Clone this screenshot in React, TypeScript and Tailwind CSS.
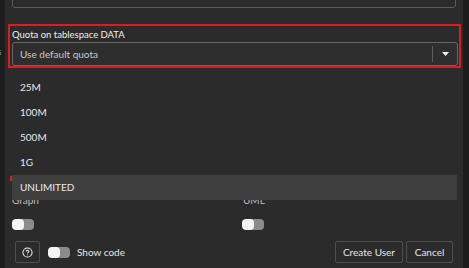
import { CircleHelp } from "lucide-react";

// ------------------------
// Types
// ------------------------
interface ToggleProps {
  className?: string;
}

const quotaOptions = ["25M", "100M", "500M", "1G", "UNLIMITED"];

function Toggle({ className = "" }: ToggleProps) {
  return (
    <div className={`flex h-[11px] w-[22px] overflow-hidden rounded-[4px] bg-[#8b8b8b] ${className}`}>
      <div className="h-full w-[12px] rounded-[4px] bg-[#f4f4f4]" />
    </div>
  );
}

export default function App() {
  return (
    <div
      className="flex h-[268px] w-[469px] overflow-hidden bg-[#1c1c1c] text-[10px] text-[#e6e6e6]"
      style={{ fontFamily: 'Lato, "Noto Sans", sans-serif' }}
    >
      {/* left strip with page behind */}
      <div className="relative w-[5px] shrink-0">
        <span className="absolute left-[-5px] top-[44px] text-[10px] text-[#8a8a8a]">ls</span>
      </div>

      {/* Dialog panel */}
      <div className="relative flex w-[458px] shrink-0 flex-col bg-[#2b2b2b]">
        {/* previous field, scrolled off the top */}
        <div className="mx-[7px] mt-[-16px] h-[24px] rounded-[3px] border border-[#5c5c5c]" />

        {/* Quota field, outlined in red */}
        <div className="relative ml-[3px] mr-[2px] mt-[16px] flex h-[44px] flex-col border-2 border-[#e01b1b] px-[2px]">
          <label className="mt-[2px] h-[14px] text-[9.5px] leading-[14px] text-[#f0f0f0]">Quota on tablespace DATA</label>
          <div className="mr-[-1px] flex h-[24px] items-center rounded-[3px] border border-[#666666] bg-[#2e2e2e]">
            <span className="flex-1 pl-[7px] text-[#c9c9c9]">Use default quota</span>
            <div className="h-[16px] w-px bg-[#5e5e5e]" />
            <div className="flex w-[24px] items-center justify-center">
              <svg width="7" height="4" viewBox="0 0 7 4">
                <path d="M0 0 H7 L3.5 4 Z" fill="#f2f2f2" />
              </svg>
            </div>
          </div>
        </div>

        {/* fields hidden behind the open list */}
        <div className="mt-[125px] grid grid-cols-[230px_1fr] px-[7px]">
          <div className="flex flex-col">
            <span className="h-[14px] leading-[14px] text-[#bdbdbd]">Graph</span>
            <Toggle className="mt-[12px]" />
          </div>
          <div className="flex flex-col">
            <span className="h-[14px] pl-[1px] leading-[14px] text-[#bdbdbd]">UML</span>
            <Toggle className="mt-[12px]" />
          </div>
        </div>

        {/* Footer */}
        <div className="mt-[11px] flex items-center px-[10px]">
          <button className="flex h-[22px] w-[25px] items-center justify-center rounded-[2px] border border-[#4f4f4f]">
            <CircleHelp size={11} strokeWidth={2.2} color="#ededed" />
          </button>
          <Toggle className="ml-[8px]" />
          <span className="ml-[7px] text-[#e6e6e6]">Show code</span>
          <div className="flex-1" />
          <button className="h-[22px] w-[68px] rounded-[2px] border border-[#4f4f4f] text-[#e6e6e6]">Create User</button>
          <button className="ml-[3px] h-[22px] w-[47px] rounded-[2px] border border-[#4f4f4f] text-[#e6e6e6]">Cancel</button>
        </div>

        {/* Open dropdown list */}
        <div className="absolute left-[7px] top-[70px] w-[445px] bg-[#2b2b2b] pt-[5px]">
          {quotaOptions.map((opt) => (
            <div
              key={opt}
              className={`flex h-[25px] items-center pl-[8px] text-[#e8e8e8] ${
                opt === "UNLIMITED" ? "bg-[#3f3f3f]" : ""
              }`}
            >
              {opt}
            </div>
          ))}
        </div>
        <span className="absolute left-[5px] top-[176px] h-[5px] w-[2px] bg-[#e01b1b]" />
      </div>

      {/* right strip */}
      <div className="flex-1" />
    </div>
  );
}
